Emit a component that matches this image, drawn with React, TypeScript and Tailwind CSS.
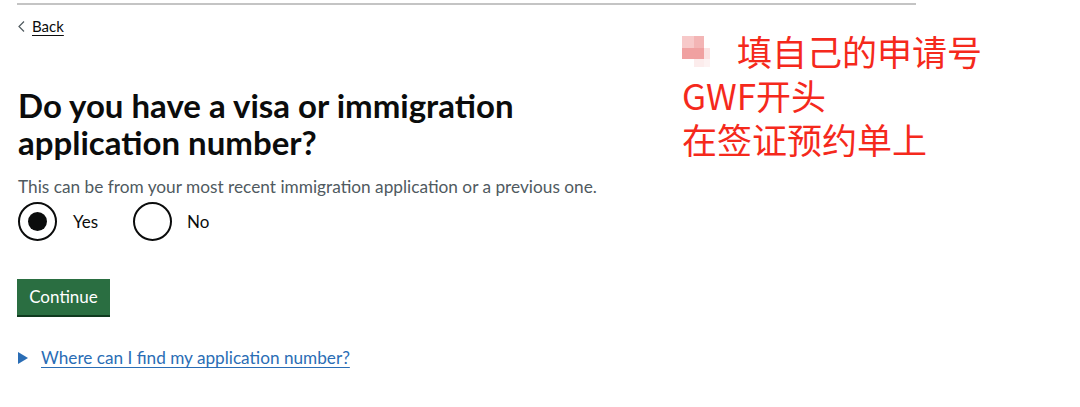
import React from "react";

const font = { fontFamily: '"Lato", "Liberation Sans", Arial, sans-serif' };

export default function App() {
  return (
    <div className="relative w-[1080px] h-[407px] bg-white overflow-hidden" style={font}>
      <div className="ml-[17px] w-[899px] h-[2px] mt-[3px] bg-[#c4c4c4]" />
      <div className="flex">
        <div className="flex flex-col pl-[18px] w-[650px]">
          <a className="mt-[10px] flex items-center gap-[7px] text-[15px] text-[#0b0c0c] h-[22px]">
            <svg width="7" height="11" viewBox="0 0 7 11" className="mt-[1px]">
              <path d="M6 0.5 L1 5.5 L6 10.5" fill="none" stroke="#505a5f" strokeWidth="1.2" />
            </svg>
            <span className="underline underline-offset-[3px] decoration-1">Back</span>
          </a>
          <h1 className="mt-[50px] text-[33px] leading-[37px] font-bold text-[#0b0c0c]">
            Do you have a visa or immigration
            <br />
            application number?
          </h1>
          <p className="mt-[16px] text-[17.25px] leading-[20px] text-[#505a5f]">
            This can be from your most recent immigration application or a previous one.
          </p>
          <div className="mt-[5px] flex items-center gap-[16px]">
            <div className="flex items-center gap-[16px]">
              <div className="w-[39px] h-[39px] rounded-full border-2 border-[#0b0c0c] flex items-center justify-center">
                <div className="w-[19px] h-[19px] rounded-full bg-[#0b0c0c]" />
              </div>
              <span className="text-[17px] text-[#0b0c0c] w-[44px]">Yes</span>
            </div>
            <div className="flex items-center gap-[15px]">
              <div className="w-[39px] h-[39px] rounded-full border-2 border-[#0b0c0c]" />
              <span className="text-[17px] text-[#0b0c0c]">No</span>
            </div>
          </div>
          <div className="mt-[38px]">
            <button className="bg-[#2a6e41] text-white text-[17px] leading-[20px] px-[11px] pt-[8px] pb-[8px] shadow-[0_2px_0_#0f3a1e] -ml-[1px] w-[93px]">
              Continue
            </button>
          </div>
          <div className="mt-[30px] flex items-center gap-[13px]">
            <svg width="10" height="12" viewBox="0 0 10 12">
              <path d="M0 0 L10 6 L0 12 Z" fill="#2a6db5" />
            </svg>
            <span className="text-[17.2px] text-[#2a6db5] underline underline-offset-[3px] decoration-1">
              Where can I find my application number?
            </span>
          </div>
        </div>
        <div className="mt-[24px] ml-[32px] text-[#f5291c] text-[35px] leading-[44px]" style={{ fontFamily: '"Noto Sans CJK SC", "Noto Sans", sans-serif' }}>
          <div className="flex items-center">
            <div className="grid grid-cols-[12px_10px_6px] grid-rows-[12px_11px_8px] w-[28px] h-[31px] mr-[27px]">
              <div className="bg-[#f7c9c9]" />
              <div className="bg-[#f3b5b5]" />
              <div />
              <div className="bg-[#f0a1a1]" />
              <div className="bg-[#f0a1a1]" />
              <div className="bg-[#fbe3e3]" />
              <div />
              <div className="bg-[#fcecec]" />
              <div className="bg-[#fdf2f2]" />
            </div>
            <span>填自己的申请号</span>
          </div>
          <div>GWF开头</div>
          <div>在签证预约单上</div>
        </div>
      </div>
    </div>
  );
}
